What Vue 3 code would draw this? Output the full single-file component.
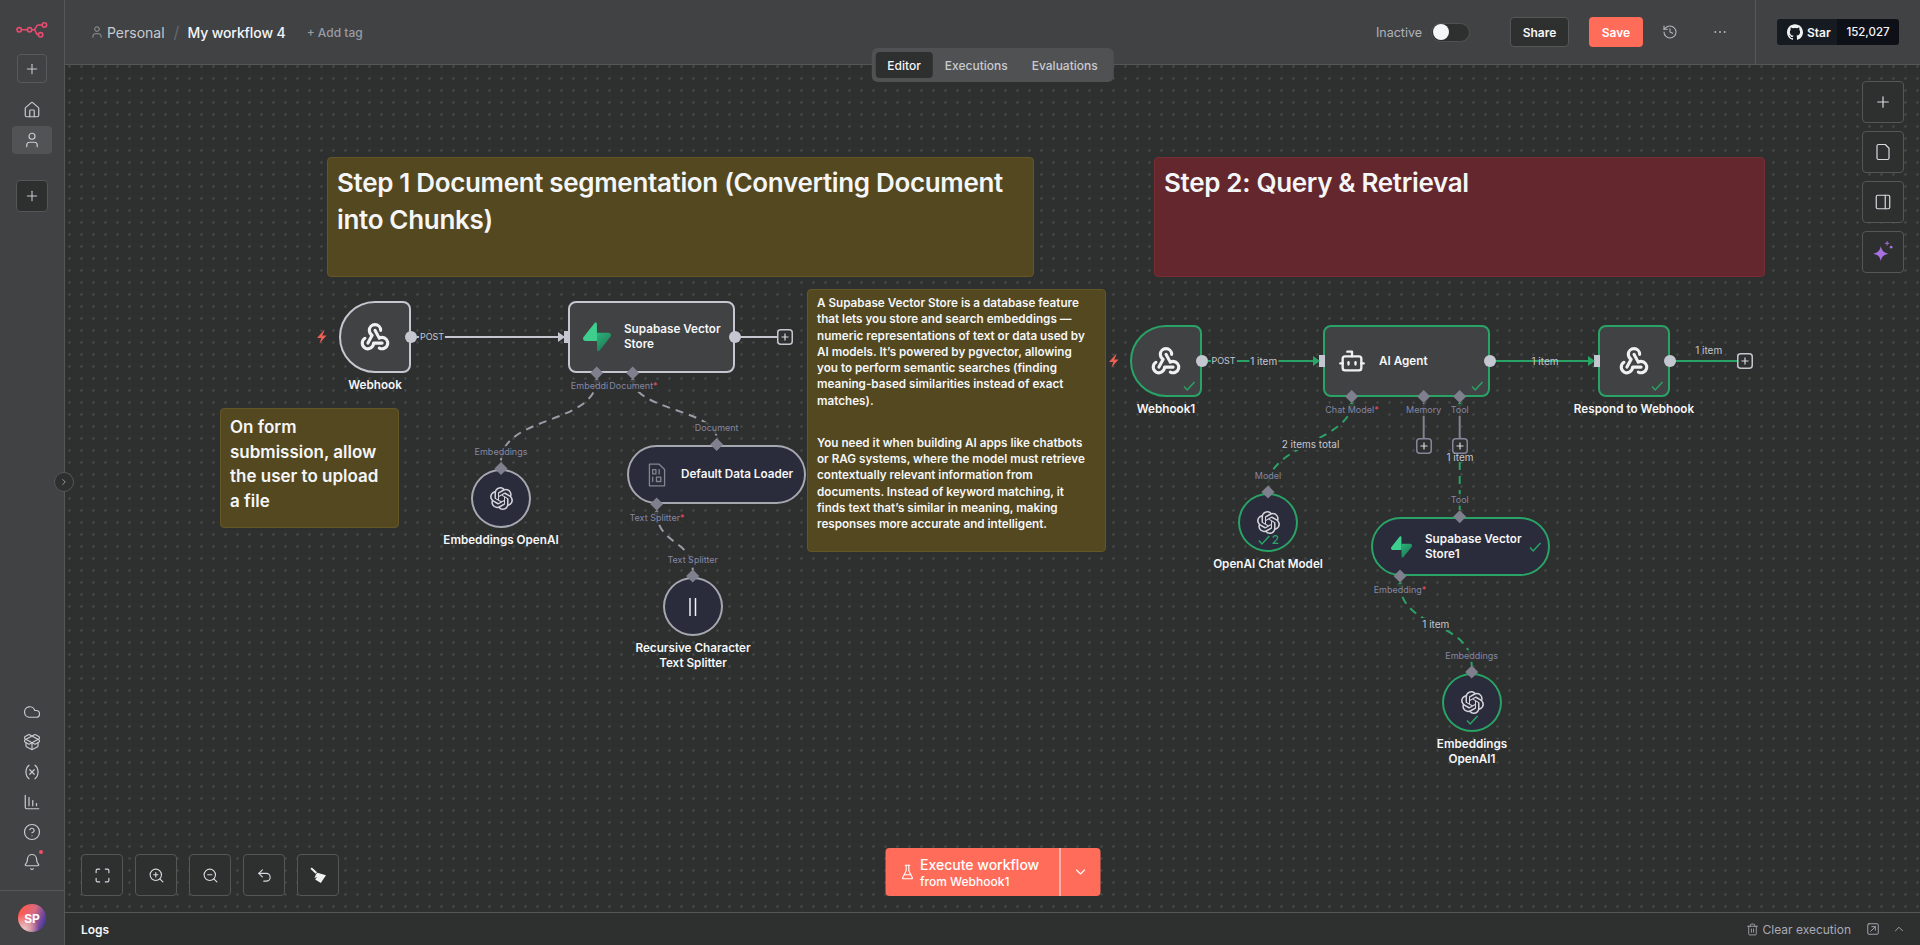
<template>
  <div class="app">
    <aside class="sidebar">
      <svg class="logo" viewBox="0 0 32 16" width="32" height="16" fill="none" stroke="#ea4b71" stroke-width="1.6">
        <circle cx="3.2" cy="7.8" r="2.2" />
        <circle cx="13.6" cy="7.8" r="2.2" />
        <circle cx="28.4" cy="3" r="2.2" />
        <circle cx="24.6" cy="12.8" r="2.2" />
        <path d="M5.4 7.8h6M15.8 7.8h2c2.6 0 1.6-4.8 4.4-4.8h4M17.8 7.8c2.6 0 1.4 5 4.6 5" />
      </svg>
      <button class="side-add"><Icon name="plus" :size="16" /></button>
      <button class="side-item first"><Icon name="home" :size="18" /></button>
      <button class="side-item active"><Icon name="user" :size="18" /></button>
      <button class="side-add dark"><Icon name="plus" :size="16" /></button>

      <div class="side-bottom">
        <button v-for="i in sideIcons" :key="i" class="side-link">
          <Icon :name="i" :size="18" />
          <span v-if="i === 'bell'" class="side-dot"></span>
        </button>
      </div>
      <div class="side-foot">
        <div class="avatar">SP</div>
      </div>
    </aside>

    <button class="collapse"><Icon name="chevronRight" :size="10" /></button>

    <div class="content">
      <header class="topbar">
        <Icon class="crumb-icon" name="user" :size="14" />
        <span class="crumb">Personal</span>
        <span class="slash">/</span>
        <span class="wf-name">My workflow 4</span>
        <span class="add-tag">+ Add tag</span>

        <div class="actions">
          <span class="state">Inactive</span>
          <span class="toggle"><span class="knob"></span></span>
          <button class="btn share">Share</button>
          <button class="btn save">Save</button>
          <Icon class="act-icon history" name="history" :size="16" />
          <Icon class="act-icon more" name="dots" :size="16" :sw="3" />
        </div>
        <div class="star-wrap">
          <div class="star">
            <span class="star-left">
              <svg viewBox="0 0 24 24" width="16" height="16" fill="#f0f1f3"><path :d="githubPath" /></svg>
              Star
            </span>
            <span class="star-count">152,027</span>
          </div>
        </div>
      </header>

      <nav class="tabs">
        <button class="tab on">Editor</button>
        <button class="tab">Executions</button>
        <button class="tab">Evaluations</button>
      </nav>

      <section class="canvas">
        <div class="board">
          <div
            v-for="n in notes"
            :key="n.x"
            class="note"
            :class="[n.color, n.size]"
            :style="{ left: n.x + 'px', top: n.y + 'px', width: n.w + 'px', height: n.h + 'px' }"
          >
            <p v-for="p in n.text" :key="p">{{ p }}</p>
          </div>

          <svg class="layer" viewBox="0 0 1920 945" width="1920" height="945" fill="none">
            <defs>
              <linearGradient id="supaGrad" x1="0" y1="0" x2="0.6" y2="1">
                <stop offset="0" stop-color="#2bb27a" />
                <stop offset="1" stop-color="#1f7a55" />
              </linearGradient>
            </defs>
            <path v-for="e in edges" :key="e.d" :d="e.d" :class="['edge', e.kind]" />
          </svg>

          <div
            v-for="n in nodes"
            :key="n.title"
            class="node"
            :class="[n.shape, { ok: n.ok }]"
            :style="{ left: n.x + 'px', top: n.y + 'px', width: n.w + 'px', height: n.h + 'px' }"
          >
            <span class="node-icon" :class="n.icon">
              <Icon v-if="n.icon === 'webhook'" name="webhook" :size="34" :sw="2.2" />
              <Icon v-else-if="n.icon === 'bot'" name="bot" :size="34" :sw="2" />
              <Icon v-else-if="n.icon === 'binary'" name="fileBinary" :size="26" :sw="1.2" />
              <svg v-else-if="n.icon === 'split'" viewBox="0 0 8 20" width="8" height="20" stroke="#f0f1f3" stroke-width="1.5"><path d="M1 1v18M6.5 1v18" /></svg>
              <svg v-else-if="n.icon === 'openai'" viewBox="0 0 24 24" width="23" height="23" fill="#d3d5db"><path :d="openaiPath" /></svg>
              <svg v-else viewBox="0 0 109 113" :width="n.iconW" :height="n.iconH">
                <path d="M63.7 110.3c-2.9 3.6-8.7 1.6-8.7-3L54 40.1h45.2c8.2 0 12.8 9.5 7.7 15.9z" fill="url(#supaGrad)" />
                <path d="M45.3 2.1c2.9-3.6 8.7-1.6 8.7 3l.5 67.2H9.8c-8.2 0-12.7-9.5-7.6-15.9z" fill="#3ecf8e" />
              </svg>
            </span>
            <span v-if="n.inner" class="node-text"><template v-for="(l, i) in n.inner" :key="l"><br v-if="i" />{{ l }}</template></span>
            <span v-if="n.ok" class="check">
              <svg viewBox="0 0 14 12" width="14" height="12" fill="none" stroke="#29a366" stroke-width="1.5"><path d="M2 6.5 5.2 10 12.5 2" /></svg>
              <b v-if="n.count">{{ n.count }}</b>
            </span>
            <span v-if="n.label" class="node-label"><template v-for="(l, i) in n.label" :key="l"><br v-if="i" />{{ l }}</template></span>
          </div>

          <svg class="layer" viewBox="0 0 1920 945" width="1920" height="945">
            <polygon v-for="s in stubs" :key="s.x" :points="`${s.x - 4},${s.y + 4} ${s.x},${s.y} ${s.x + 4},${s.y + 4}`" :class="s.kind" />
            <circle v-for="d in dots" :key="d.x" :cx="d.x" :cy="d.y" r="6" class="port-dot" />
            <rect v-for="r in inputs" :key="r.x" :x="r.x" :y="r.y" width="6" height="12" class="port-dot" />
            <polygon v-for="a in arrows" :key="a.x" :points="`${a.x},${a.y - 5} ${a.x + 7},${a.y} ${a.x},${a.y + 5}`" :class="a.kind" />
            <polygon
              v-for="d in diamonds"
              :key="d.x + '-' + d.y"
              :points="`${d.x},${d.y - 6.5} ${d.x + 6.5},${d.y} ${d.x},${d.y + 6.5} ${d.x - 6.5},${d.y}`"
              class="diamond"
            />
            <g v-for="p in plusBoxes" :key="p.x" class="plus-box" :class="p.kind">
              <rect :x="p.x + 0.75" :y="p.y + 0.75" width="14.5" height="14.5" rx="3" />
              <path :d="`M${p.x + 8} ${p.y + 4.5}v7M${p.x + 4.5} ${p.y + 8}h7`" />
            </g>
            <path d="M323.5 330.5l-6.5 7.5h4.2l-1.7 5.5 7-8h-4.2l2.2-5z" class="bolt" />
            <path d="M1115.5 354.5l-6.5 7.5h4.2l-1.7 5.5 7-8h-4.2l2.2-5z" class="bolt" />
          </svg>

          <span
            v-for="l in labels"
            :key="l.t + l.x"
            class="float-label"
            :class="l.kind"
            :style="{ left: l.x + 'px', top: l.y + 'px' }"
          >{{ l.t }}<i v-if="l.req">*</i></span>
        </div>

        <div class="tools-right">
          <button class="tool"><Icon name="plus" :size="18" /></button>
          <button class="tool"><Icon name="note" :size="18" /></button>
          <button class="tool"><Icon name="panel" :size="18" /></button>
          <button class="tool">
            <svg viewBox="0 0 24 24" width="26" height="26" fill="#a970e0">
              <path d="M10 6.5c.9 4.4 2.6 6.1 7 7-4.4.9-6.1 2.6-7 7-.9-4.4-2.6-6.1-7-7 4.4-.9 6.1-2.6 7-7z" />
              <circle cx="19.5" cy="7.5" r="1.2" />
              <path d="M15.8 2v4M13.8 4h4" stroke="#a970e0" stroke-width="0.9" />
            </svg>
          </button>
        </div>

        <div class="tools-left">
          <button class="tool"><Icon name="fit" :size="17" /></button>
          <button class="tool"><Icon name="zoomIn" :size="17" /></button>
          <button class="tool"><Icon name="zoomOut" :size="17" /></button>
          <button class="tool"><Icon name="undo" :size="17" /></button>
          <button class="tool">
            <svg viewBox="0 0 16 16" width="16" height="16" fill="#f0f1f3">
              <path d="M.4 1.8 1.8.6 7 5.2 5.6 6.800z" />
              <path d="M6 7.2 7.4 5.800 16 8.200 10.800 16 5.200 12.400l2-2.600-2.800 1.400z" />
            </svg>
          </button>
        </div>

        <div class="exec">
          <button class="exec-main">
            <Icon name="flask" :size="16" />
            <span class="exec-text">
              <strong>Execute workflow</strong>
              <small>from Webhook1</small>
            </span>
          </button>
          <button class="exec-more"><Icon name="chevronDown" :size="16" /></button>
        </div>
      </section>

      <footer class="logs">
        <span class="logs-title">Logs</span>
        <span class="logs-clear"><Icon name="trash" :size="13" />Clear execution</span>
        <Icon class="logs-pop" name="popout" :size="14" />
        <Icon class="logs-up" name="chevronUp" :size="14" />
      </footer>
    </div>
  </div>
</template>

<script setup>
import { h } from 'vue'

const ICONS = {
  plus: ['M12 5v14', 'M5 12h14'],
  home: ['M15 21v-8a1 1 0 0 0-1-1h-4a1 1 0 0 0-1 1v8', 'M3 10a2 2 0 0 1 .709-1.528l7-5.999a2 2 0 0 1 2.582 0l7 5.999A2 2 0 0 1 21 10v9a2 2 0 0 1-2 2H5a2 2 0 0 1-2-2z'],
  user: ['M19 21v-2a4 4 0 0 0-4-4H9a4 4 0 0 0-4 4v2', 'M16 7a4 4 0 1 1-8 0 4 4 0 0 1 8 0'],
  cloud: ['M17.5 19H9a7 7 0 1 1 6.71-9h1.79a4.5 4.5 0 1 1 0 9Z'],
  box: ['M12 22v-9', 'M15.17 2.21a1.67 1.67 0 0 1 1.63 0L21 4.57a1.93 1.93 0 0 1 0 3.36L8.82 14.79a1.655 1.655 0 0 1-1.64 0L3 12.43a1.93 1.93 0 0 1 0-3.36z', 'M20 13v3.87a2.06 2.06 0 0 1-1.07 1.8l-5.9 3.1a2.06 2.06 0 0 1-2.06 0l-5.9-3.1A2.06 2.06 0 0 1 4 16.87V13', 'M21 12.43a1.93 1.93 0 0 0 0-3.36L8.83 2.2a1.64 1.64 0 0 0-1.63 0L3 4.57a1.93 1.93 0 0 0 0 3.36l12.18 6.86a1.636 1.636 0 0 0 1.63 0z'],
  variable: ['M8 21s-4-3-4-9 4-9 4-9', 'M16 3s4 3 4 9-4 9-4 9', 'M15 9l-6 6', 'M9 9l6 6'],
  chart: ['M3 3v16a2 2 0 0 0 2 2h16', 'M8 17V6', 'M13 17v-7', 'M18 17v-3'],
  help: ['M22 12a10 10 0 1 1-20 0 10 10 0 0 1 20 0', 'M9.09 9a3 3 0 0 1 5.83 1c0 2-3 3-3 3', 'M12 17h.01'],
  bell: ['M10.268 21a2 2 0 0 0 3.464 0', 'M3.262 15.326A1 1 0 0 0 4 17h16a1 1 0 0 0 .74-1.673C19.41 13.956 18 12.499 18 8A6 6 0 0 0 6 8c0 4.499-1.411 5.956-2.738 7.326'],
  history: ['M3 12a9 9 0 1 0 9-9 9.75 9.75 0 0 0-6.74 2.74L3 8', 'M3 3v5h5', 'M12 7v5l4 2'],
  dots: ['M5 12h.01', 'M12 12h.01', 'M19 12h.01'],
  note: ['M15 2H6a2 2 0 0 0-2 2v16a2 2 0 0 0 2 2h12a2 2 0 0 0 2-2V7Z'],
  panel: ['M5 3h14a2 2 0 0 1 2 2v14a2 2 0 0 1-2 2H5a2 2 0 0 1-2-2V5a2 2 0 0 1 2-2z', 'M15 3v18'],
  fit: ['M8 3H5a2 2 0 0 0-2 2v3', 'M21 8V5a2 2 0 0 0-2-2h-3', 'M3 16v3a2 2 0 0 0 2 2h3', 'M16 21h3a2 2 0 0 0 2-2v-3'],
  zoomIn: ['M19 11a8 8 0 1 1-16 0 8 8 0 0 1 16 0', 'M21 21l-4.35-4.35', 'M11 8v6', 'M8 11h6'],
  zoomOut: ['M19 11a8 8 0 1 1-16 0 8 8 0 0 1 16 0', 'M21 21l-4.35-4.35', 'M8 11h6'],
  undo: ['M9 14 4 9l5-5', 'M4 9h10.5a5.5 5.5 0 0 1 0 11H11'],
  flask: ['M10 2v7.527a2 2 0 0 1-.211.896L4.72 20.55a1 1 0 0 0 .9 1.45h12.76a1 1 0 0 0 .9-1.45l-5.069-10.127A2 2 0 0 1 14 9.527V2', 'M8.5 2h7', 'M7 16h10'],
  chevronDown: ['m6 9 6 6 6-6'],
  chevronUp: ['m18 15-6-6-6 6'],
  chevronRight: ['m9 18 6-6-6-6'],
  trash: ['M3 6h18', 'M19 6v14a2 2 0 0 1-2 2H7a2 2 0 0 1-2-2V6', 'M8 6V4a2 2 0 0 1 2-2h4a2 2 0 0 1 2 2v2', 'M10 11v6', 'M14 11v6'],
  popout: ['M5 3h14a2 2 0 0 1 2 2v14a2 2 0 0 1-2 2H5a2 2 0 0 1-2-2V5a2 2 0 0 1 2-2z', 'M8 16l8-8', 'M10 8h6v6'],
  webhook: ['M4.876 13.61a4 4 0 1 0 6.124 3.39h6', 'M15.066 20.502a4 4 0 1 0 1.934 -7.502c-.706 0 -1.424 .179 -2 .5l-3 -5.5', 'M16 8a4 4 0 1 0 -8 0c0 1.506 .77 2.818 2 3.5l-3 5.5'],
  bot: ['M12 8V4H8', 'M6 8h12a2 2 0 0 1 2 2v8a2 2 0 0 1-2 2H6a2 2 0 0 1-2-2v-8a2 2 0 0 1 2-2z', 'M2 14h2', 'M20 14h2', 'M15 13v2', 'M9 13v2'],
  fileBinary: ['M5 2h9l5 5v15H5z', 'M8 7h3v4H8z', 'M14 7v4', 'M8 14v4', 'M11.5 14h4v4h-4z']
}

// small inline icon, strokes only
const Icon = (props) =>
  h(
    'svg',
    {
      viewBox: '0 0 24 24',
      width: props.size,
      height: props.size,
      fill: 'none',
      stroke: 'currentColor',
      'stroke-width': props.sw || 1.6,
      'stroke-linecap': 'round',
      'stroke-linejoin': 'round'
    },
    ICONS[props.name].map((d) => h('path', { d }))
  )
Icon.props = ['name', 'size', 'sw']

const sideIcons = ['cloud', 'box', 'variable', 'chart', 'help', 'bell']

const githubPath =
  'M12 .297c-6.63 0-12 5.373-12 12 0 5.303 3.438 9.8 8.205 11.385.6.113.82-.258.82-.577 0-.285-.01-1.04-.015-2.04-3.338.724-4.042-1.61-4.042-1.61C4.422 18.07 3.633 17.7 3.633 17.7c-1.087-.744.084-.729.084-.729 1.205.084 1.838 1.236 1.838 1.236 1.07 1.835 2.809 1.305 3.495.998.108-.776.417-1.305.76-1.605-2.665-.3-5.466-1.332-5.466-5.93 0-1.31.465-2.38 1.235-3.22-.135-.303-.54-1.523.105-3.176 0 0 1.005-.322 3.3 1.23.96-.267 1.98-.399 3-.405 1.02.006 2.04.138 3 .405 2.28-1.552 3.285-1.23 3.285-1.23.645 1.653.24 2.873.12 3.176.765.84 1.23 1.91 1.23 3.22 0 4.61-2.805 5.625-5.475 5.92.42.36.81 1.096.81 2.22 0 1.606-.015 2.896-.015 3.286 0 .315.21.69.825.57C20.565 22.092 24 17.592 24 12.297c0-6.627-5.373-12-12-12'
const openaiPath =
  'M22.2819 9.8211a5.9847 5.9847 0 0 0-.5157-4.9108 6.0462 6.0462 0 0 0-6.5098-2.9A6.0651 6.0651 0 0 0 4.9807 4.1818a5.9847 5.9847 0 0 0-3.9977 2.9 6.0462 6.0462 0 0 0 .7427 7.0966 5.98 5.98 0 0 0 .511 4.9107 6.051 6.051 0 0 0 6.5146 2.9001A5.9847 5.9847 0 0 0 13.2599 24a6.0557 6.0557 0 0 0 5.7718-4.2058 5.9894 5.9894 0 0 0 3.9977-2.9001 6.0557 6.0557 0 0 0-.7475-7.0729zm-9.022 12.6081a4.4755 4.4755 0 0 1-2.8764-1.0408l.1419-.0804 4.7783-2.7582a.7948.7948 0 0 0 .3927-.6813v-6.7369l2.02 1.1686a.071.071 0 0 1 .038.052v5.5826a4.504 4.504 0 0 1-4.4945 4.4944zm-9.6607-4.1254a4.4708 4.4708 0 0 1-.5346-3.0137l.142.0852 4.783 2.7582a.7712.7712 0 0 0 .7806 0l5.8428-3.3685v2.3324a.0804.0804 0 0 1-.0332.0615L9.74 19.9502a4.4992 4.4992 0 0 1-6.1408-1.6464zM2.3408 7.8956a4.485 4.485 0 0 1 2.3655-1.9728V11.6a.7664.7664 0 0 0 .3879.6765l5.8144 3.3543-2.0201 1.1685a.0757.0757 0 0 1-.071 0l-4.8303-2.7865A4.504 4.504 0 0 1 2.3408 7.872zm16.5963 3.8558L13.1038 8.364 15.1192 7.2a.0757.0757 0 0 1 .071 0l4.8303 2.7913a4.4944 4.4944 0 0 1-.6765 8.1042v-5.6772a.79.79 0 0 0-.407-.667zm2.0107-3.0231l-.142-.0852-4.7735-2.7818a.7759.7759 0 0 0-.7854 0L9.409 9.2297V6.8974a.0662.0662 0 0 1 .0284-.0615l4.8303-2.7866a4.4992 4.4992 0 0 1 6.6802 4.66zM8.3065 12.863l-2.02-1.1638a.0804.0804 0 0 1-.038-.0567V6.0742a4.4992 4.4992 0 0 1 7.3757-3.4537l-.142.0805L8.704 5.459a.7948.7948 0 0 0-.3927.6813zm1.0976-2.3654l2.602-1.4998 2.6069 1.4998v2.9994l-2.5974 1.4997-2.6067-1.4997Z'

// everything on the board is in page coordinates, it is a free canvas
const notes = [
  { x: 327, y: 157, w: 707, h: 120, color: 'yellow', size: 'big', text: ['Step 1 Document segmentation (Converting Document into Chunks)'] },
  { x: 1154, y: 157, w: 611, h: 120, color: 'red', size: 'big', text: ['Step 2: Query & Retrieval'] },
  { x: 220, y: 408, w: 179, h: 120, color: 'yellow', size: 'mid', text: ['On form submission, allow the user to upload a file'] },
  {
    x: 807,
    y: 289,
    w: 299,
    h: 263,
    color: 'yellow',
    size: 'small',
    text: [
      'A Supabase Vector Store is a database feature\nthat lets you store and search embeddings —\nnumeric representations of text or data used by\nAI models. It’s powered by pgvector, allowing\nyou to perform semantic searches (finding\nmeaning-based similarities instead of exact\nmatches).',
      'You need it when building AI apps like chatbots\nor RAG systems, where the model must retrieve\ncontextually relevant information from\ndocuments. Instead of keyword matching, it\nfinds text that’s similar in meaning, making\nresponses more accurate and intelligent.'
    ]
  }
]

const nodes = [
  { title: 'Webhook', x: 339, y: 301, w: 72, h: 72, shape: 'trigger', icon: 'webhook', label: ['Webhook'] },
  { title: 'Supabase', x: 568, y: 301, w: 167, h: 72, shape: 'box', icon: 'supa', iconW: 28, iconH: 30, inner: ['Supabase Vector', 'Store'] },
  { title: 'EmbOpenAI', x: 471, y: 469, w: 60, h: 59, shape: 'circle', icon: 'openai', label: ['Embeddings OpenAI'] },
  { title: 'Loader', x: 627, y: 445, w: 179, h: 59, shape: 'pill', icon: 'binary', inner: ['Default Data Loader'] },
  { title: 'Splitter', x: 663, y: 577, w: 60, h: 59, shape: 'circle', icon: 'split', label: ['Recursive Character', 'Text Splitter'] },
  { title: 'Webhook1', x: 1130, y: 325, w: 72, h: 72, shape: 'trigger', icon: 'webhook', ok: true, label: ['Webhook1'] },
  { title: 'Agent', x: 1323, y: 325, w: 167, h: 72, shape: 'box', icon: 'bot', ok: true, inner: ['AI Agent'] },
  { title: 'Respond', x: 1598, y: 325, w: 72, h: 72, shape: 'square', icon: 'webhook', ok: true, label: ['Respond to Webhook'] },
  { title: 'ChatModel', x: 1238, y: 493, w: 60, h: 59, shape: 'circle', icon: 'openai', ok: true, count: 2, label: ['OpenAI Chat Model'] },
  { title: 'Supabase1', x: 1371, y: 517, w: 179, h: 59, shape: 'pill', icon: 'supa', iconW: 21, iconH: 22, ok: true, inner: ['Supabase Vector', 'Store1'] },
  { title: 'Emb1', x: 1442, y: 673, w: 60, h: 59, shape: 'circle', icon: 'openai', ok: true, label: ['Embeddings', 'OpenAI1'] }
]

const edges = [
  { d: 'M417 337H560', kind: 'solid' },
  { d: 'M740 337H777', kind: 'solid' },
  { d: 'M596.7 379C596.7 425 501 415 501 462', kind: 'dash' },
  { d: 'M632.7 379C632.7 410 716.7 410 716.7 438', kind: 'dash' },
  { d: 'M656.7 511C656.7 545 692.7 540 692.7 570', kind: 'dash' },
  { d: 'M1423.7 403V438', kind: 'stub' },
  { d: 'M1459.7 403V438', kind: 'stub' },
  { d: 'M1208 361H1315', kind: 'green' },
  { d: 'M1495 361H1590', kind: 'green' },
  { d: 'M1675 361H1737', kind: 'green' },
  { d: 'M1351.7 403C1351.7 440 1268 445 1268 486', kind: 'green dashed' },
  { d: 'M1459.7 462V510', kind: 'green dashed' },
  { d: 'M1400 583C1400 630 1471.7 620 1471.7 666', kind: 'green dashed' }
]

const dots = [
  { x: 411, y: 337 }, { x: 735, y: 337 }, { x: 1202, y: 361 }, { x: 1490, y: 361 }, { x: 1670, y: 361 }
]
const inputs = [{ x: 564, y: 331 }, { x: 1319, y: 355 }, { x: 1594, y: 355 }]
const arrows = [
  { x: 558, y: 337, kind: 'fill-solid' },
  { x: 1313, y: 361, kind: 'fill-green' },
  { x: 1588, y: 361, kind: 'fill-green' }
]
const stubs = [
  { x: 596.7, y: 378, kind: 'fill-gray' },
  { x: 632.7, y: 378, kind: 'fill-gray' },
  { x: 656.7, y: 510, kind: 'fill-gray' },
  { x: 1351.7, y: 402, kind: 'fill-green' },
  { x: 1459.7, y: 402, kind: 'fill-green' },
  { x: 1400, y: 582, kind: 'fill-green' }
]
const diamonds = [
  { x: 596.7, y: 373 }, { x: 632.7, y: 373 }, { x: 501, y: 468.5 }, { x: 716.7, y: 444.5 },
  { x: 656.7, y: 504 }, { x: 692.7, y: 576 }, { x: 1351.7, y: 396.5 }, { x: 1423.7, y: 396.5 },
  { x: 1459.7, y: 396.5 }, { x: 1268, y: 492 }, { x: 1459.7, y: 516.7 }, { x: 1400, y: 576 },
  { x: 1471.7, y: 672 }
]
const plusBoxes = [
  { x: 777, y: 329 }, { x: 1737, y: 353 },
  { x: 1416, y: 438, kind: 'muted' }, { x: 1452, y: 438, kind: 'muted' }
]

const labels = [
  { t: 'POST', x: 432, y: 337, kind: 'edge-label bg tiny' },
  { t: 'Embeddi', x: 589.5, y: 385.7, kind: 'port' },
  { t: 'Document', x: 633.5, y: 385.7, kind: 'port', req: true },
  { t: 'Embeddings', x: 501, y: 451.7, kind: 'port' },
  { t: 'Document', x: 716.7, y: 427.7, kind: 'port' },
  { t: 'Text Splitter', x: 657, y: 517.7, kind: 'port', req: true },
  { t: 'Text Splitter', x: 692.7, y: 559.7, kind: 'port' },
  { t: 'POST', x: 1223.5, y: 361, kind: 'edge-label bg tiny' },
  { t: '1 item', x: 1263.7, y: 361, kind: 'edge-label bg' },
  { t: '1 item', x: 1545, y: 361, kind: 'edge-label' },
  { t: '1 item', x: 1708.7, y: 350.3, kind: 'edge-label' },
  { t: 'Chat Model', x: 1352, y: 409.7, kind: 'port', req: true },
  { t: 'Memory', x: 1423.7, y: 409.7, kind: 'port' },
  { t: 'Tool', x: 1459.7, y: 409.7, kind: 'port' },
  { t: '2 items total', x: 1310.5, y: 444.3, kind: 'edge-label bg' },
  { t: '1 item', x: 1460, y: 456.7, kind: 'edge-label' },
  { t: 'Model', x: 1268, y: 475.7, kind: 'port' },
  { t: 'Tool', x: 1459.7, y: 499.7, kind: 'port' },
  { t: 'Embedding', x: 1400, y: 589.7, kind: 'port', req: true },
  { t: '1 item', x: 1435.8, y: 624.3, kind: 'edge-label bg' },
  { t: 'Embeddings', x: 1471.7, y: 655.7, kind: 'port' }
]
</script>

<style scoped>
.app {
  position: relative;
  display: flex;
  height: 945px;
  overflow: hidden;
  font-family: Inter, 'Open Sans', sans-serif;
  color: #f5f6f8;
  background: #2e2f2f;
}

button {
  font-family: inherit;
  cursor: pointer;
}

.sidebar {
  flex: 0 0 65px;
  box-sizing: border-box;
  display: flex;
  flex-direction: column;
  align-items: center;
  background: #414244;
  border-right: 1px solid #555658;
  color: #c8cad0;
}

.logo {
  margin: 22px 0 16px;
}

.side-add {
  width: 30px;
  height: 29px;
  padding: 0;
  display: flex;
  align-items: center;
  justify-content: center;
  background: transparent;
  border: 1px solid #58595b;
  border-radius: 4px;
  color: #c8cad0;
}

.side-add.dark {
  width: 32px;
  height: 32px;
  margin-top: 26px;
  background: #2e2f2f;
  border-color: #555658;
}

.side-item {
  width: 40px;
  height: 28px;
  padding: 0;
  display: flex;
  align-items: center;
  justify-content: center;
  border: 0;
  border-radius: 4px;
  background: transparent;
  color: #c8cad0;
}

.side-item.first {
  margin: 13px 0 2px;
}

.side-item.active {
  background: #525355;
}

.side-bottom {
  margin-top: auto;
  padding-bottom: 13px;
  display: flex;
  flex-direction: column;
  align-items: center;
}

.side-link {
  position: relative;
  width: 40px;
  height: 30px;
  padding: 0;
  display: flex;
  align-items: center;
  justify-content: center;
  border: 0;
  background: transparent;
  color: #c8cad0;
}

.side-dot {
  position: absolute;
  top: 3px;
  right: 9px;
  width: 4px;
  height: 4px;
  border-radius: 50%;
  background: #f0506a;
}

.side-foot {
  align-self: stretch;
  height: 55px;
  box-sizing: border-box;
  display: flex;
  align-items: center;
  justify-content: center;
  border-top: 1px solid #555658;
}

.avatar {
  width: 28px;
  height: 28px;
  display: flex;
  align-items: center;
  justify-content: center;
  border-radius: 50%;
  font-size: 12px;
  font-weight: 700;
  color: #fff;
  background: radial-gradient(circle at 20% 90%, #e8c8c8 0, transparent 45%), linear-gradient(110deg, #ff5a50 15%, #d86a80 50%, #3f35a8 90%);
}

.collapse {
  position: absolute;
  left: 54px;
  top: 472px;
  z-index: 5;
  width: 20px;
  height: 20px;
  padding: 0;
  display: flex;
  align-items: center;
  justify-content: center;
  border-radius: 50%;
  border: 1px solid #555658;
  background: #2e2f2f;
  color: #c8cad0;
}

.content {
  position: relative;
  flex: 1;
  min-width: 0;
  display: flex;
  flex-direction: column;
}

.topbar {
  flex: 0 0 65px;
  box-sizing: border-box;
  display: flex;
  align-items: center;
  padding-left: 25px;
  background: #414244;
  border-bottom: 1px solid #555658;
}

.crumb-icon {
  color: #9a9ca4;
}

.crumb {
  margin-left: 3px;
  font-size: 14px;
  color: #c8cad0;
}

.slash {
  margin: 0 8px 0 9px;
  font-size: 16px;
  color: #66686c;
}

.wf-name {
  font-size: 14px;
  font-weight: 500;
  letter-spacing: -0.1px;
}

.add-tag {
  margin-left: 21px;
  font-size: 12px;
  font-weight: 500;
  color: #9a9ca4;
}

.actions {
  margin-left: auto;
  display: flex;
  align-items: center;
  height: 100%;
}

.state {
  font-size: 12.5px;
  color: #b0b2b8;
}

.toggle {
  margin: 0 0 0 9px;
  width: 39px;
  height: 19px;
  box-sizing: border-box;
  display: flex;
  align-items: center;
  padding-left: 1px;
  border-radius: 10px;
  border: 1px solid #4f5052;
  background: #2e2f2f;
}

.knob {
  width: 16px;
  height: 16px;
  border-radius: 50%;
  background: #f5f6f8;
}

.btn {
  height: 30px;
  padding: 0;
  border-radius: 4px;
  font-size: 12px;
  font-weight: 600;
}

.share {
  width: 59px;
  margin-left: 40px;
  background: #2e2f2f;
  border: 1px solid #555658;
  color: #f5f6f8;
}

.save {
  width: 54px;
  margin-left: 20px;
  background: #ff6d5a;
  border: 0;
  color: #fff;
}

.act-icon {
  color: #b4b6bc;
}

.history {
  margin-left: 19px;
}

.more {
  margin-left: 34px;
  margin-right: 27px;
}

.star-wrap {
  height: 100%;
  display: flex;
  align-items: center;
  padding: 0 21px;
  border-left: 1px solid #555658;
}

.star {
  height: 26px;
  display: flex;
  font-size: 12px;
  font-weight: 600;
  border-radius: 3px;
  overflow: hidden;
}

.star-left {
  width: 60px;
  box-sizing: border-box;
  display: flex;
  align-items: center;
  gap: 4px;
  padding-left: 10px;
  background: #161b22;
}

.star-count {
  width: 62px;
  display: flex;
  align-items: center;
  justify-content: center;
  font-size: 11.5px;
  font-weight: 500;
  background: #0d1117;
}

.tabs {
  position: absolute;
  top: 48px;
  left: 50%;
  z-index: 4;
  transform: translateX(-50%);
  height: 34px;
  box-sizing: border-box;
  display: flex;
  padding: 4px;
  border-radius: 6px;
  background: #505153;
}

.tab {
  padding: 0 12px;
  border: 0;
  border-radius: 4px;
  background: transparent;
  font-size: 12px;
  font-weight: 500;
  color: #c8cad0;
}

.tab.on {
  background: #2e2f2f;
  color: #f5f6f8;
}

.canvas {
  position: relative;
  flex: 1;
  overflow: hidden;
  background-color: #2e2f2f;
  background-image: radial-gradient(circle at center, #5f6061 0, #5f6061 0.6px, transparent 0.9px);
  background-size: 12px 12px;
  background-position: -1.5px -4.5px;
}

.board {
  position: absolute;
  left: -65px;
  top: -65px;
  width: 1920px;
  height: 945px;
}

.layer {
  position: absolute;
  left: 0;
  top: 0;
  pointer-events: none;
}

.note {
  position: absolute;
  box-sizing: border-box;
  border-radius: 4px;
  border: 1px solid;
  font-weight: 600;
  color: #f5f6f8;
}

.note p {
  margin: 0;
}

.note.yellow {
  background: #544820;
  border-color: #645727;
}

.note.red {
  background: #65272e;
  border-color: #782d33;
}

.note.big {
  padding: 6px 9px;
  font-size: 26px;
  line-height: 37px;
  letter-spacing: -0.33px;
}

.note.mid {
  padding: 6px 9px;
  font-size: 17px;
  line-height: 24.5px;
}

.note.small {
  padding: 5px 9px;
  font-size: 11.7px;
  line-height: 16.3px;
  white-space: pre-line;
}

.note.small p + p {
  margin-top: 25.7px;
}

.edge {
  stroke-width: 2;
  fill: none;
}

.edge.solid {
  stroke: #c4c7d0;
}

.edge.dash {
  stroke: #9a9ca6;
  stroke-dasharray: 8 6;
}

.edge.stub {
  stroke: #80828f;
}

.edge.green {
  stroke: #29a366;
}

.edge.dashed {
  stroke-dasharray: 8 6;
}

.node {
  position: absolute;
  box-sizing: border-box;
  display: flex;
  align-items: center;
  justify-content: center;
  border: 2px solid #c4c7d0;
  background: #414244;
  color: #f5f6f8;
}

.node.ok {
  border-color: #29a366;
}

.node.trigger {
  border-radius: 36px 8px 8px 36px;
}

.node.square,
.node.box {
  border-radius: 8px;
}

.node.box {
  justify-content: flex-start;
  gap: 13px;
  padding-left: 13px;
}

.node.box .node-icon {
  width: 28px;
}

.node.pill {
  justify-content: flex-start;
  gap: 9px;
  padding-left: 13px;
  border-radius: 30px;
  background: #2a2b3b;
  border-color: #a6a8b0;
}

.node.pill .node-icon {
  width: 30px;
}

.node.circle {
  border-radius: 50%;
  background: #2a2b3b;
  border-color: #a6a8b0;
}

.node.ok.pill,
.node.ok.circle {
  border-color: #29a366;
}

.node-icon {
  display: flex;
  align-items: center;
  justify-content: center;
  color: #f0f1f3;
}

.node-icon.webhook {
  margin-top: -2px;
}

.node-icon.binary {
  color: #84868f;
}

.node-text {
  font-size: 11.7px;
  font-weight: 600;
  line-height: 15px;
}

.check {
  position: absolute;
  right: 4px;
  bottom: 3px;
  display: flex;
  align-items: center;
  gap: 1px;
  color: #29a366;
  font-size: 12px;
  font-weight: 400;
  line-height: 12px;
}

.check b {
  font-weight: 500;
}

.node.pill .check {
  right: 6px;
  bottom: auto;
  top: 50%;
  transform: translateY(-50%);
}

.node.circle .check {
  right: auto;
  bottom: 4px;
  left: 50%;
  transform: translateX(-50%);
}

.node-label {
  position: absolute;
  top: calc(100% + 7px);
  left: 50%;
  transform: translateX(-50%);
  white-space: nowrap;
  text-align: center;
  font-size: 11.7px;
  font-weight: 600;
  line-height: 15px;
}

.port-dot {
  fill: #c4c7d0;
}

.diamond {
  fill: #7e808e;
}

.fill-solid {
  fill: #c4c7d0;
}

.fill-green {
  fill: #29a366;
}

.fill-gray {
  fill: #80828f;
}

.plus-box rect {
  fill: #2e2f2f;
  stroke: #c4c7d0;
  stroke-width: 1.5;
}

.plus-box path {
  stroke: #d8dae0;
  stroke-width: 1.2;
}

.plus-box.muted rect {
  stroke: #84869a;
}

.bolt {
  fill: #ea5f53;
}

.float-label {
  position: absolute;
  transform: translate(-50%, -50%);
  white-space: nowrap;
  padding: 0 1px;
  font-size: 10px;
  line-height: 12px;
}

.float-label i {
  font-style: normal;
  color: #f0506a;
}

.port {
  font-size: 9px;
  color: #8587a3;
  background: rgba(46, 47, 47, 0.8);
}

.edge-label {
  color: #c4c7d0;
}

.edge-label.bg {
  background: #2e2f2f;
}

.edge-label.tiny {
  font-size: 9px;
}

.tools-right {
  position: absolute;
  top: 16px;
  right: 16px;
  display: flex;
  flex-direction: column;
  gap: 8px;
}

.tools-left {
  position: absolute;
  left: 16px;
  bottom: 16px;
  display: flex;
  gap: 12px;
}

.tool {
  width: 42px;
  height: 42px;
  padding: 0;
  display: flex;
  align-items: center;
  justify-content: center;
  border: 1px solid #555658;
  border-radius: 4px;
  background: #2e2f2f;
  color: #d8dae0;
}

.exec {
  position: absolute;
  left: 50%;
  bottom: 16px;
  transform: translateX(-50%);
  display: flex;
  height: 48px;
  border-radius: 4px;
  overflow: hidden;
  background: #ff6d5a;
  color: #fff;
}

.exec-main {
  width: 175px;
  padding: 0 0 0 14px;
  display: flex;
  align-items: center;
  gap: 5px;
  border: 0;
  border-right: 1px solid #f5f6f8;
  background: transparent;
  color: #fff;
}

.exec-text {
  display: flex;
  flex-direction: column;
  align-items: flex-start;
  gap: 1px;
}

.exec-text strong {
  font-size: 14px;
  font-weight: 500;
  line-height: 17px;
}

.exec-text small {
  font-size: 12px;
  font-weight: 500;
  line-height: 15px;
}

.exec-more {
  width: 40px;
  padding: 0;
  display: flex;
  align-items: center;
  justify-content: center;
  border: 0;
  background: transparent;
  color: #fff;
}

.logs {
  flex: 0 0 33px;
  box-sizing: border-box;
  display: flex;
  align-items: center;
  padding: 0 14px 0 16px;
  background: #2e2f2f;
  border-top: 1px solid #555658;
  font-size: 12px;
}

.logs-title {
  font-weight: 600;
}

.logs-clear {
  margin-left: auto;
  display: flex;
  align-items: center;
  gap: 4px;
  color: #a8aab4;
}

.logs-pop {
  margin-left: 15px;
  color: #a8aab4;
}

.logs-up {
  margin-left: 12px;
  color: #a8aab4;
}
</style>
